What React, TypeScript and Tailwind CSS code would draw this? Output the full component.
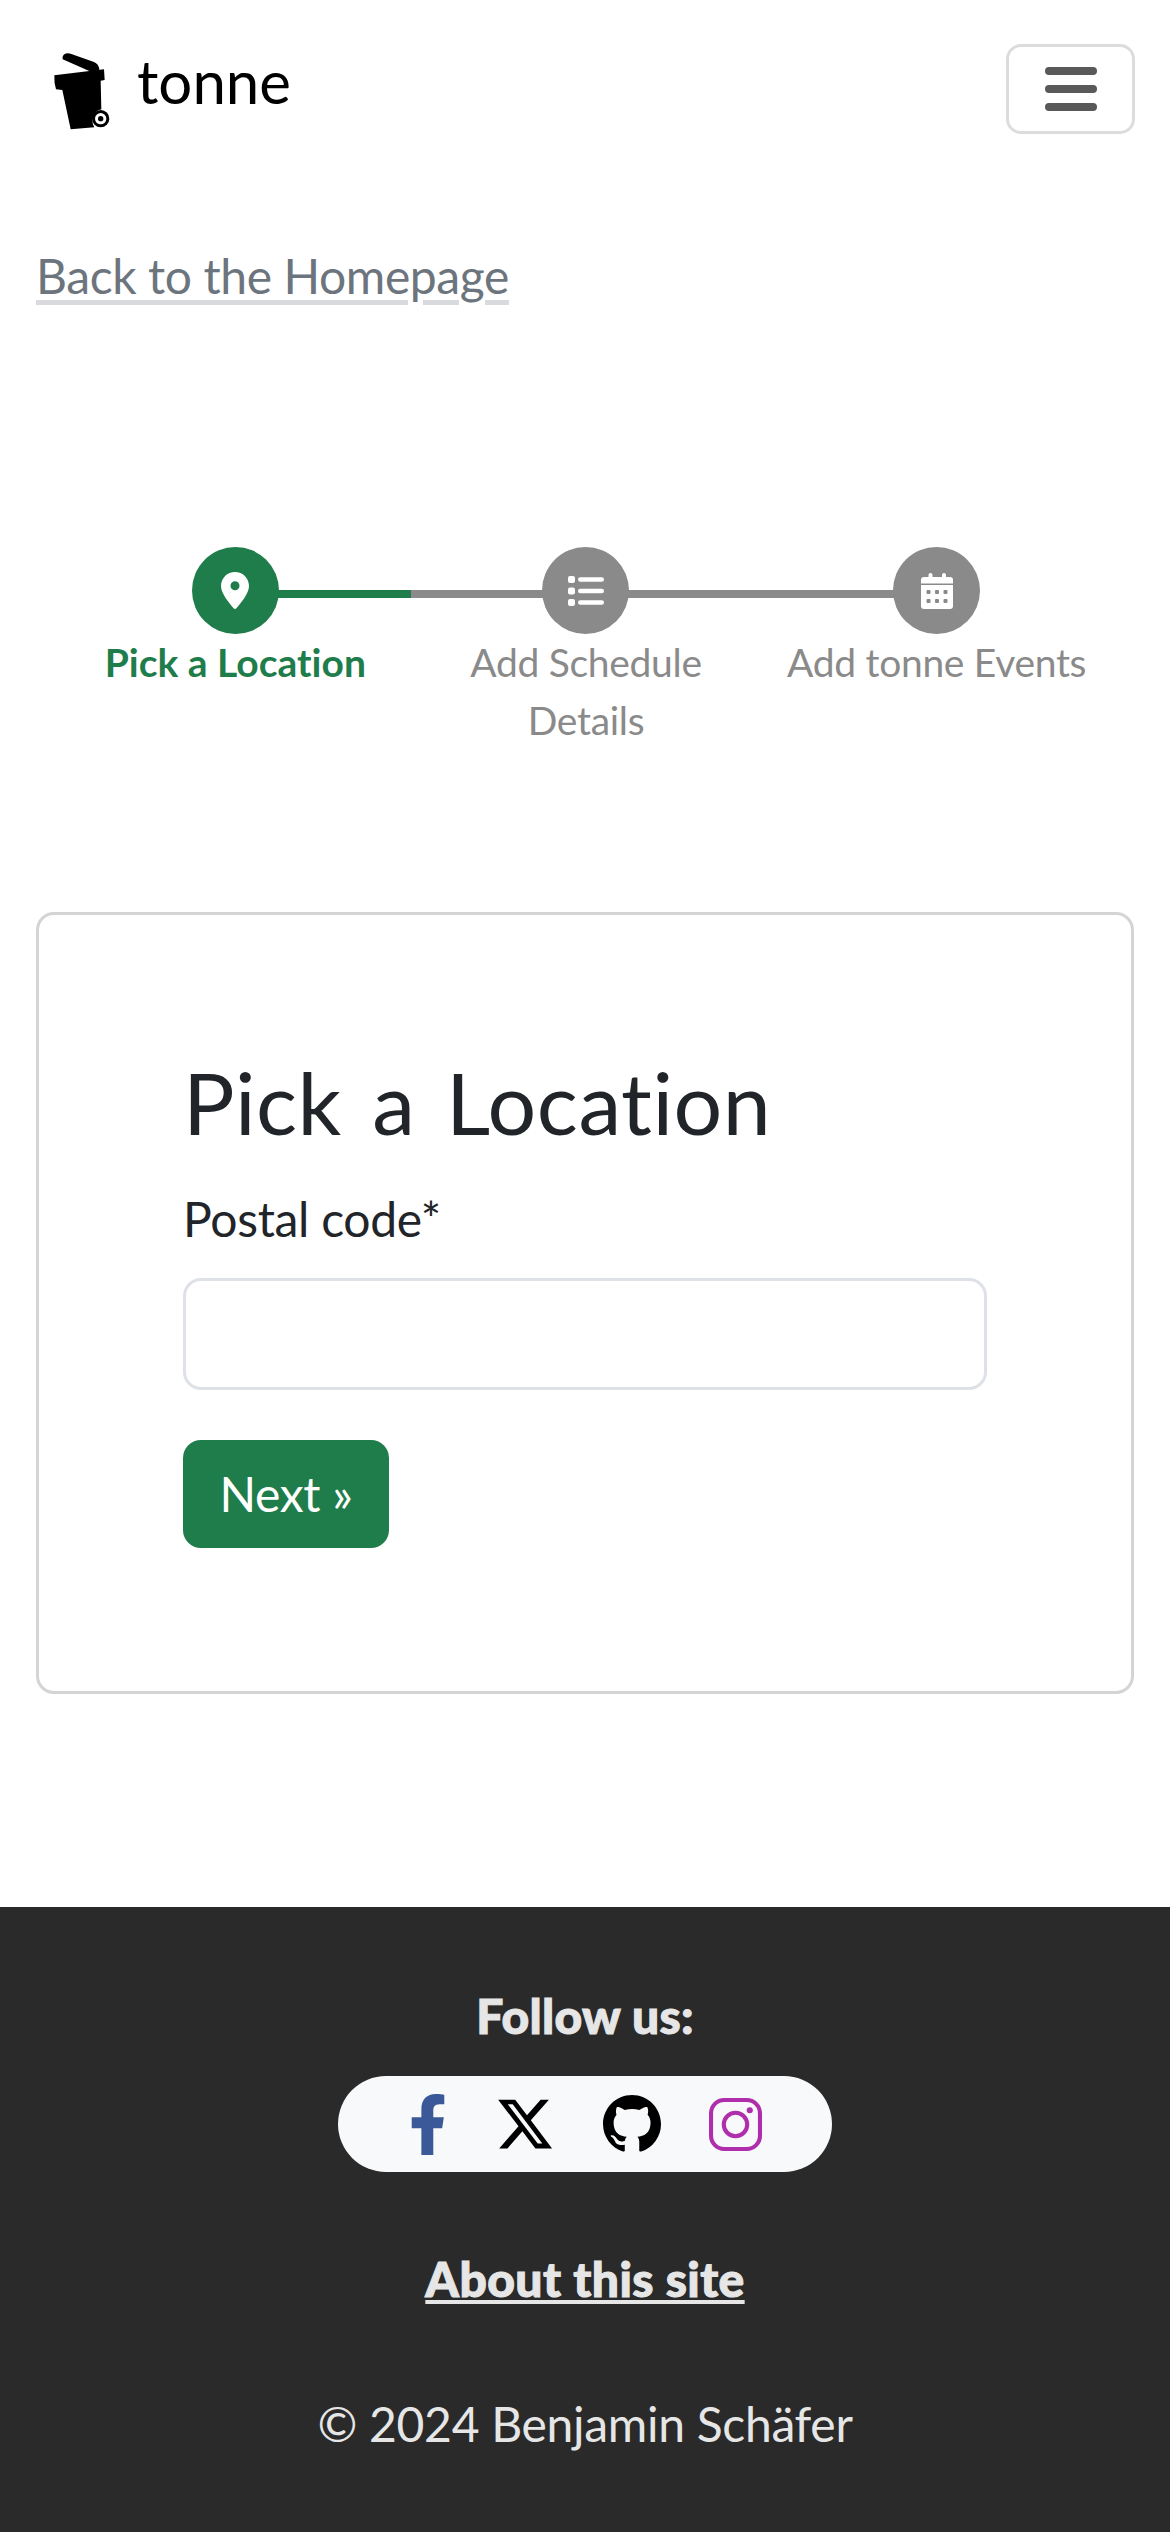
import { FaFacebookF } from "react-icons/fa"
import { FaXTwitter } from "react-icons/fa6"
import { BsGithub } from "react-icons/bs"

const PinIcon = () => (
  <svg width="28" height="37" viewBox="0 0 28 37" fill="white">
    <path fillRule="evenodd" d="M14 0C6.2 0 0 6.2 0 14c0 7.5 8.5 17.5 12.6 22.3.7.9 2.1.9 2.8 0C19.5 31.500 28 21.500 28 14 28 6.200 21.800 0 14 0Zm0 9.200a4.500 4.500 0 1 1 0 9 4.500 4.500 0 0 1 0-9Z" />
  </svg>
)

const ListIcon = () => (
  <svg width="36" height="30" viewBox="0 0 36 30" fill="white">
    <rect x="0" y="0" width="7" height="7" rx="2" />
    <rect x="0" y="11.500" width="7" height="7" rx="2" />
    <rect x="0" y="23" width="7" height="7" rx="2" />
    <rect x="10" y="1.250" width="26" height="4.500" rx="2.250" />
    <rect x="10" y="12.750" width="26" height="4.500" rx="2.250" />
    <rect x="10" y="24.250" width="26" height="4.500" rx="2.250" />
  </svg>
)

const CalendarIcon = () => (
  <svg width="32" height="36" viewBox="0 0 32 36" fill="white">
    <rect x="7.500" y="0" width="4" height="8" rx="2" />
    <rect x="21" y="0" width="4" height="8" rx="2" />
    <path d="M3 4h26a3 3 0 0 1 3 3v3.500H0V7a3 3 0 0 1 3-3Z" />
    <path d="M0 12h32v21a3 3 0 0 1-3 3H3a3 3 0 0 1-3-3V12Z" />
    <g fill="#8a8a8a">
      <rect x="5.500" y="17" width="4" height="4" rx="1" />
      <rect x="14" y="17" width="4" height="4" rx="1" />
      <rect x="22.500" y="17" width="4" height="4" rx="1" />
      <rect x="5.500" y="26" width="4" height="4" rx="1" />
      <rect x="14" y="26" width="4" height="4" rx="1" />
      <rect x="22.500" y="26" width="4" height="4" rx="1" />
    </g>
  </svg>
)

const steps = [
  { label: "Pick a Location", icon: <PinIcon />, active: true },
  { label: "Add Schedule Details", icon: <ListIcon />, active: false },
  { label: "Add tonne Events", icon: <CalendarIcon />, active: false },
]

const BinLogo = () => (
  <svg width="100" height="110" viewBox="0 0 300 330" className="shrink-0">
    <path d="M98 88 Q96 78 104 72 Q112 67 124 72 L192 96 Q206 102 208 118 L204 130 L176 122 Z" fill="#000" />
    <path d="M73 136 L222 118 L224 150 L212 152 L214 238 Q190 243 187 270 Q187 285 193 292 L122 298 L97 180 L78 178 Q72 160 73 136 Z" fill="#000" />
    <circle cx="212" cy="266" r="26" fill="#000" />
    <circle cx="212" cy="266" r="17" fill="#fff" />
    <circle cx="212" cy="266" r="8" fill="#000" />
  </svg>
)

const InstagramIcon = () => (
  <svg width="53" height="53" viewBox="0 0 52 52" fill="none" stroke="#ae2eab" strokeWidth="4">
    <rect x="2" y="2" width="48" height="48" rx="13" />
    <circle cx="26" cy="26" r="11.5" />
    <circle cx="40" cy="12" r="3" fill="#ae2eab" stroke="none" />
  </svg>
)

export default function App() {
  return (
    <div className="min-h-[2532px] flex flex-col bg-white font-['Lato','Liberation_Sans',sans-serif] [font-variant-ligatures:none] text-[48px] tracking-[-0.3px] text-[#212529]">
      <nav className="flex items-start justify-between pl-[30px] pr-[35px] pt-[30px]">
        <a className="flex items-start gap-[7px] text-black text-[60px] leading-[80px] tracking-normal">
          <BinLogo />
          <span className="mt-[11px]">tonne</span>
        </a>
        <button className="mt-[14px] w-[129px] h-[90px] flex flex-col items-center justify-center gap-[10px] border-[3px] border-[#dcdcdc] rounded-[15px]">
          <span className="w-[52px] h-[8px] rounded-full bg-[#595959]" />
          <span className="w-[52px] h-[8px] rounded-full bg-[#595959]" />
          <span className="w-[52px] h-[8px] rounded-full bg-[#595959]" />
        </button>
      </nav>

      <div className="px-[36px] mt-[100px]">
        <a className="text-[#6c757d] leading-[72px] tracking-[-0.4px] underline decoration-[#d8dadd] decoration-[5px] underline-offset-[6px]">Back to the Homepage</a>
      </div>

      <div className="grid grid-cols-3 mt-[235px] pl-[60px] pr-[58px]">
        {steps.map((s, i) => (
          <div key={s.label} className="relative flex flex-col items-center text-center">
            {i < 2 && <div className={"absolute top-[43px] left-1/2 w-1/2 h-[8px] " + (s.active ? "bg-[#1e7d4a]" : "bg-[#8a8a8a]")} />}
            {i > 0 && <div className="absolute top-[43px] right-1/2 w-1/2 h-[8px] bg-[#8a8a8a]" />}
            <div className={"relative z-10 w-[87px] h-[87px] rounded-full flex items-center justify-center text-white " + (s.active ? "bg-[#1e7d4a]" : "bg-[#8a8a8a]")}>
              {s.icon}
            </div>
            <div className={"-mt-[1px] text-[39px] leading-[58px] px-[30px] -mx-[30px] " + (s.active ? "text-[#1e7d4a] font-bold tracking-normal" : "text-[#8a8a8a]")}>{s.label}</div>
          </div>
        ))}
      </div>

      <div className="mx-[36px] mt-[163px] h-[782px] border-[3px] border-[#d2d4d6] rounded-[18px] pt-[137px] px-[144px]">
        <h1 className="text-[86px] leading-[100px] tracking-[0.5px] [word-spacing:8px] font-normal text-[#212529]">Pick a Location</h1>
        <label className="block mt-[31px] leading-[72px]">Postal code*</label>
        <input className="block w-full mt-[23px] h-[112px] border-[3px] border-[#dee2e6] rounded-[18px]" />
        <button className="block mt-[50px] w-[206px] h-[108px] bg-[#1e7d4a] text-white rounded-[18px]">Next »</button>
      </div>

      <footer className="mt-[213px] flex-1 bg-[#2a2a2a] flex flex-col items-center pt-[80px]">
        <div className="font-black tracking-[0.3px] [-webkit-text-stroke:1px] text-[#e6e6e6] leading-[58px]">Follow us:</div>
        <div className="mt-[31px] w-[494px] h-[96px] rounded-full bg-[#f8f9fa] flex items-center gap-[48px] pl-[71px]">
          <FaFacebookF style={{ width: 38, height: 61 }} color="#3b5998" />
          <FaXTwitter size={60} color="#000" />
          <BsGithub size={58} color="#000" />
          <InstagramIcon />
        </div>
        <a className="mt-[78px] font-black tracking-[0.4px] [-webkit-text-stroke:1px] text-[#e6e6e6] leading-[58px] underline">About this site</a>
        <div className="mt-[87px] text-[#e6e6e6] leading-[58px]">© 2024 Benjamin Schäfer</div>
      </footer>
    </div>
  )
}
